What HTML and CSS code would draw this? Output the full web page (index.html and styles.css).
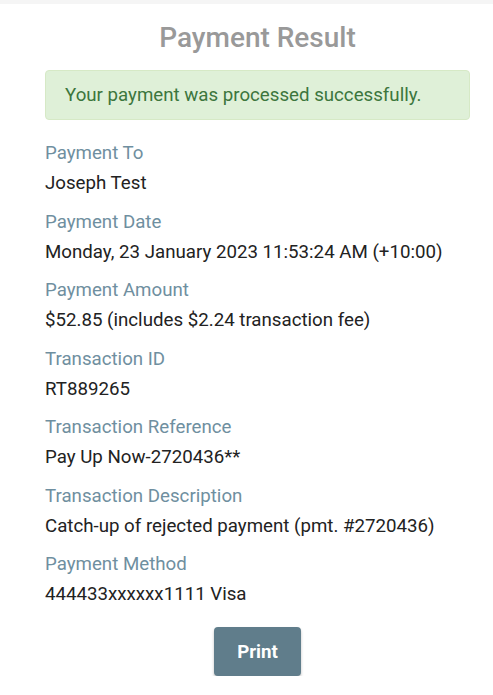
FILE: index.html
```html
<!DOCTYPE html>
<html>
<head>
<meta charset="utf-8">
<link rel="stylesheet" href="styles.css">
</head>
<body>
<div class="topbar"></div>
<main class="page">
  <h1 class="title">Payment Result</h1>
  <div class="alert">Your payment was processed successfully.</div>
  <dl class="fields">
    <div class="field"><dt>Payment To</dt><dd>Joseph Test</dd></div>
    <div class="field"><dt>Payment Date</dt><dd>Monday, 23 January 2023 11:53:24 AM (+10:00)</dd></div>
    <div class="field"><dt>Payment Amount</dt><dd>$52.85 (includes $2.24 transaction fee)</dd></div>
    <div class="field"><dt>Transaction ID</dt><dd>RT889265</dd></div>
    <div class="field"><dt>Transaction Reference</dt><dd>Pay Up Now-2720436**</dd></div>
    <div class="field"><dt>Transaction Description</dt><dd>Catch-up of rejected payment (pmt. #2720436)</dd></div>
    <div class="field"><dt>Payment Method</dt><dd>444433xxxxxx1111 Visa</dd></div>
  </dl>
  <div class="actions"><button class="btn">Print</button></div>
</main>
</body>
</html>
```
FILE: styles.css
```css
html, body { margin: 0; padding: 0; background: #fff; }
body { font-family: Roboto, "Liberation Sans", sans-serif; color: #222; }
.topbar { height: 4px; background: #f5f5f5; }
.page { width: 425px; margin-left: 45px; padding-top: 18px; }
.title { margin: 0; text-align: center; font-size: 28px; font-weight: 500; color: #999; line-height: 32px; }
.alert { margin-top: 16px; height: 48px; display: flex; align-items: center; padding: 0 19px; background: #dff0d8; border: 1px solid #d6e9c6; border-radius: 4px; color: #3c763d; font-size: 18.7px; }
.fields { margin: 22px 0 0; padding: 0; display: flex; flex-direction: column; gap: 16.5px; }
.field { display: flex; flex-direction: column; gap: 8px; }
.fields dt { font-size: 18.7px; line-height: 22px; color: #6f8fa0; }
.fields dd { margin: 0; font-size: 18.7px; line-height: 22px; color: #222; }
.actions { display: flex; justify-content: center; margin-top: 22px; }
.btn { width: 87px; height: 49px; border: none; border-radius: 4px; background: #607d8b; color: #fff; font-family: Roboto, "Liberation Sans", sans-serif; font-weight: 700; font-size: 18.7px; box-shadow: 0 2px 3px rgba(0,0,0,0.25); }
```
